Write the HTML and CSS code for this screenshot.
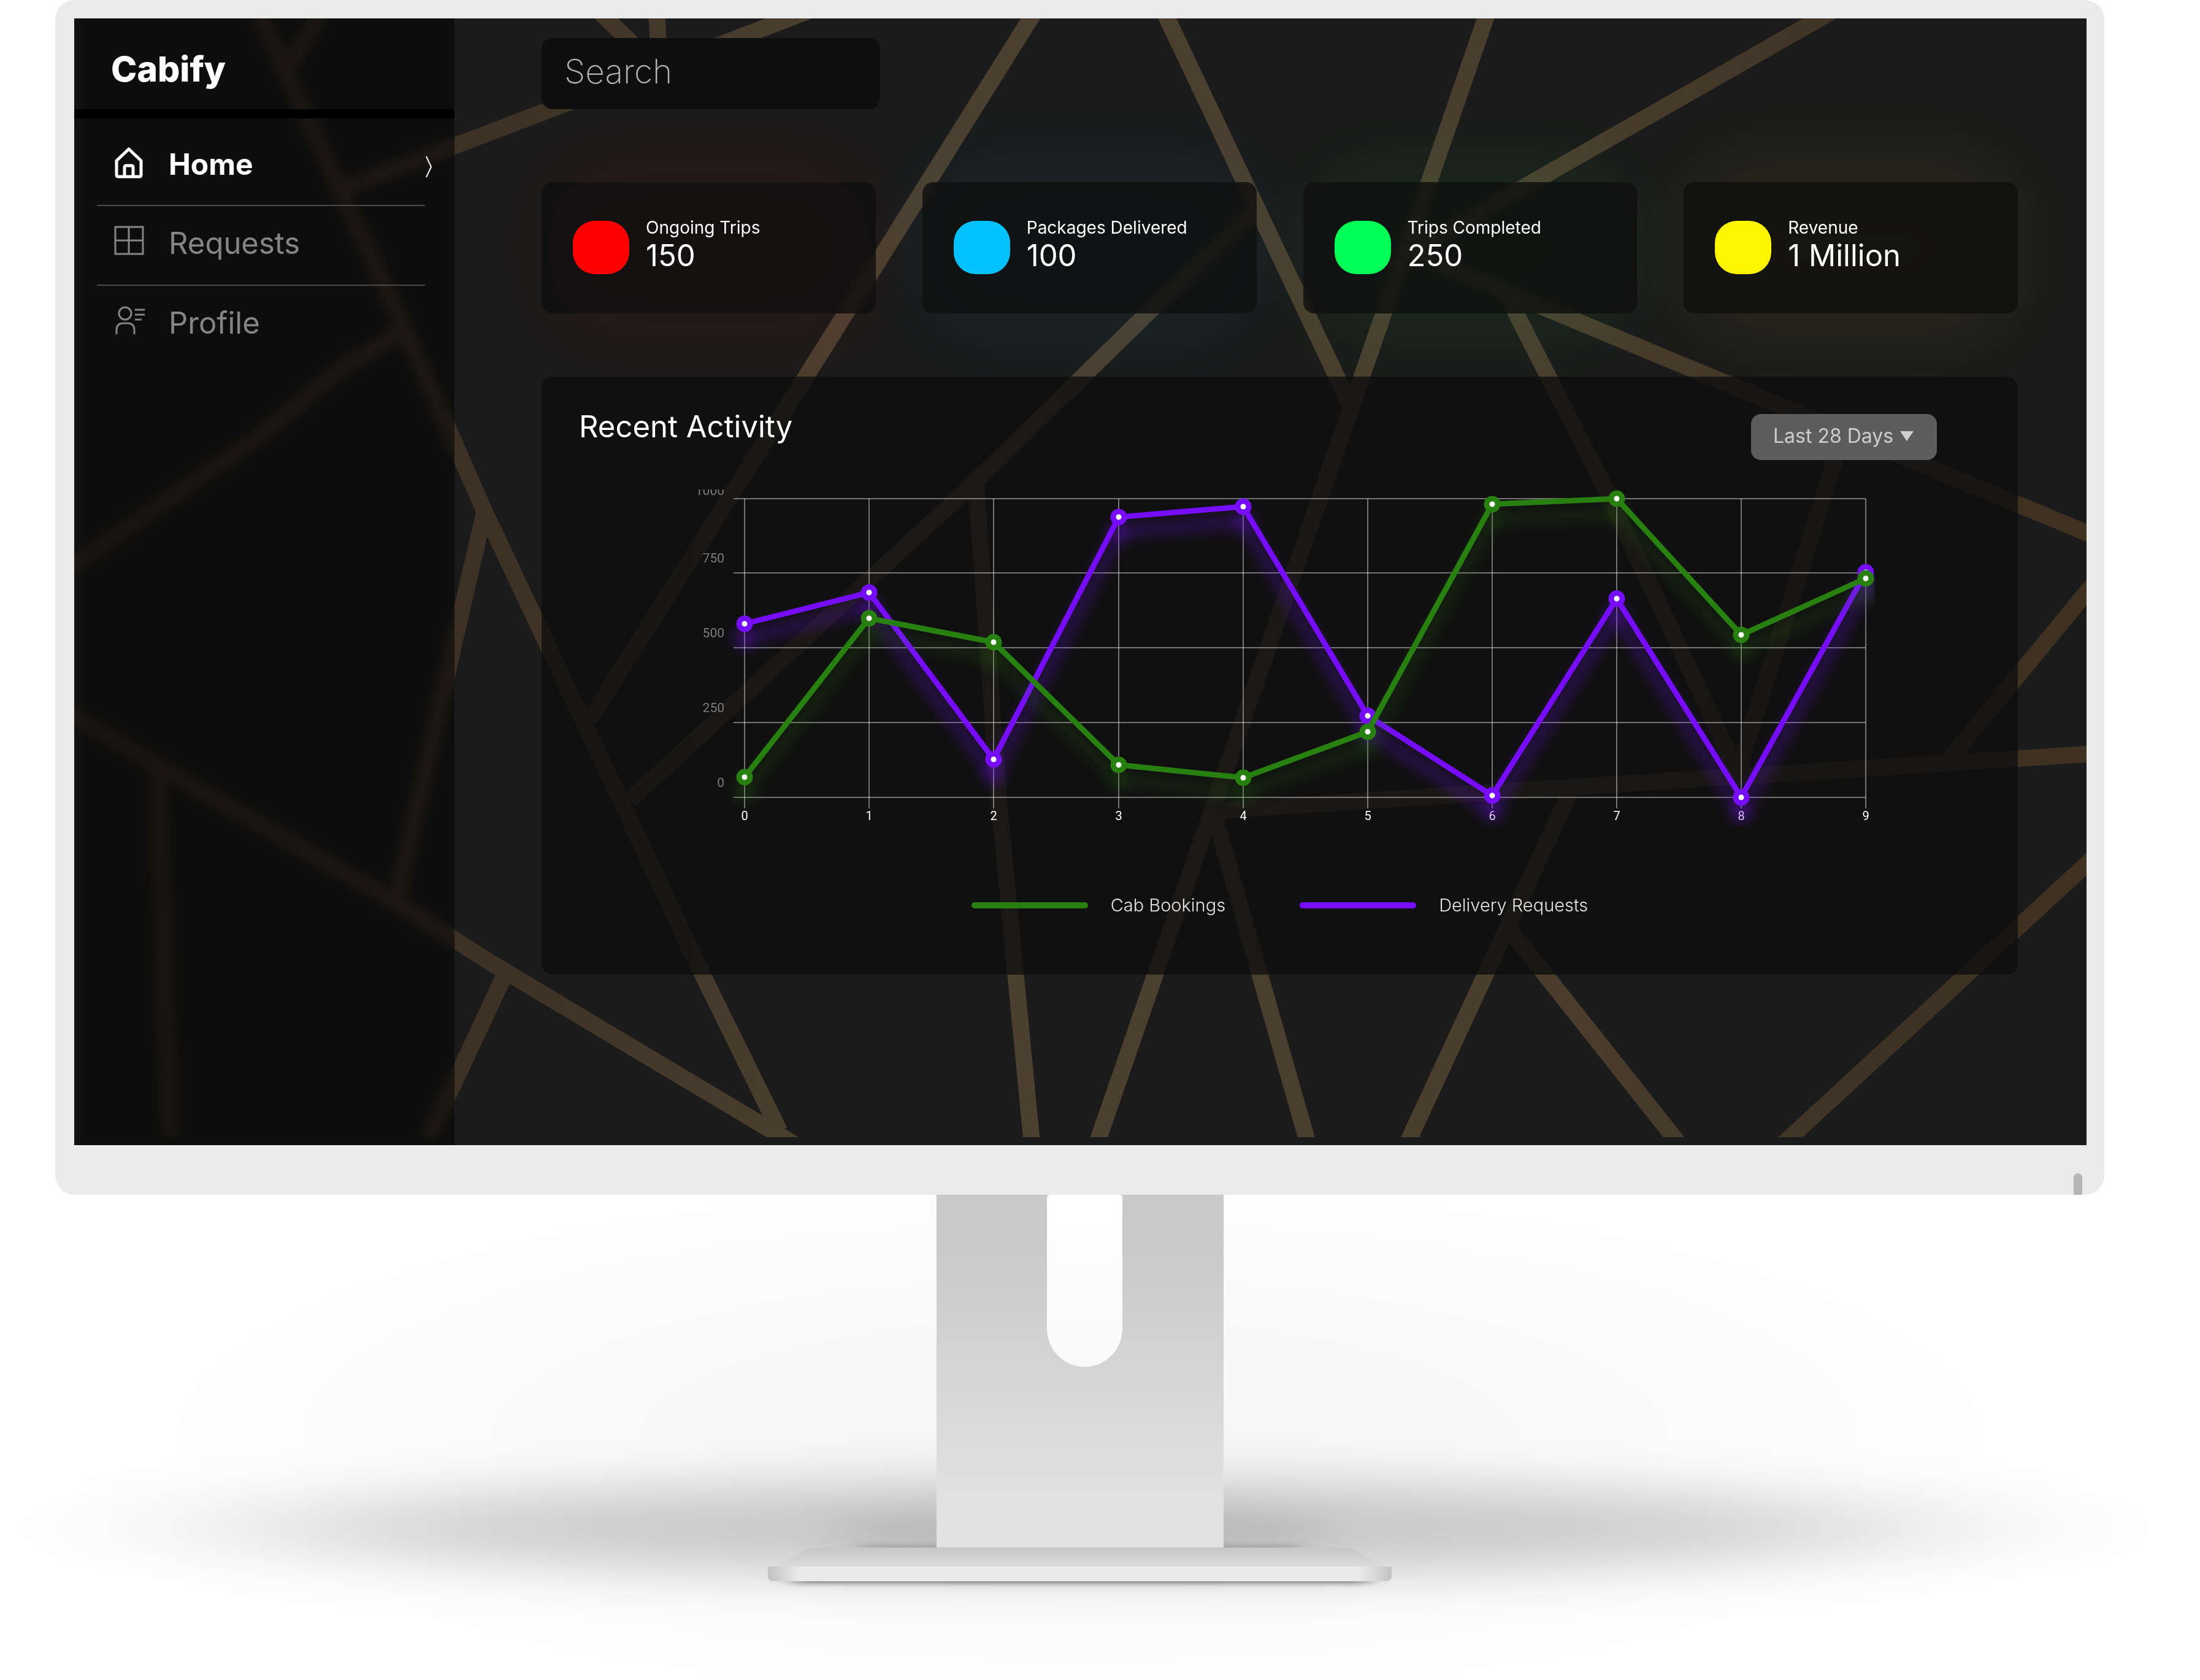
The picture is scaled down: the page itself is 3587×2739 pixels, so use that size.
FILE: index.html
```html
<!DOCTYPE html>
<html lang="en">
<head>
<meta charset="utf-8">
<meta name="viewport" content="width=device-width, initial-scale=1">
<title>Cabify</title>
<link rel="stylesheet" href="styles.css">
</head>
<body>
<div class="monitor">
  <div class="screen">
    <svg class="lattice" viewBox="120 30 3281 1838" preserveAspectRatio="none" aria-hidden="true">
      <defs>
        <linearGradient id="bronze" gradientUnits="userSpaceOnUse" x1="120" y1="0" x2="3401" y2="0">
          <stop offset="0" stop-color="#33291c"/>
          <stop offset=".22" stop-color="#3d3225"/>
          <stop offset=".38" stop-color="#4c4030"/>
          <stop offset=".75" stop-color="#4a3d2e"/>
          <stop offset=".9" stop-color="#3e3224"/>
          <stop offset="1" stop-color="#3f3121"/>
        </linearGradient>
        <clipPath id="lattice-area"><path d="M120 30H3401V1855H120Z"/></clipPath>
      </defs>
      <g fill="none" stroke="url(#bronze)" stroke-width="27" clip-path="url(#lattice-area)">
        <path d="M1690 13L1314 613L960 1174"/>
        <path d="M1894 13L2200 660"/>
        <path d="M2427 13L1785 1872"/>
        <path d="M2996 13L2300 410"/>
        <path d="M2303 413L3420 877"/>
        <path d="M2450 470L2617 798L2832 1260"/>
        <path d="M3003 710L2832 1260"/>
        <path d="M1990 1322L2530 1286L3420 1229"/>
        <path d="M3420 943L3180 1235"/>
        <path d="M3420 1392L2902 1870"/>
        <path d="M2560 1290L2291 1870"/>
        <path d="M2463 1520L2740 1870"/>
        <path d="M1979 1330L2133 1870"/>
        <path d="M2050 340L1870 511L1590 785L1026 1305"/>
        <path d="M1590 785L1627 1301L1682 1870"/>
        <path d="M417 13L658 536L789 834L1147 1595L1270 1845"/>
        <path d="M528 13L470 107"/>
        <path d="M562 306L1330 13"/>
        <path d="M970 13L1075 115L1069 13"/>
        <path d="M655 540L557 600L420 713L100 935"/>
        <path d="M789 834L741 1042L645 1470"/>
        <path d="M100 1157L257 1250L645 1472L800 1571L1300 1870"/>
        <path d="M257 1250L276 1870"/>
        <path d="M822 1590L690 1872"/>
      </g>
    </svg>

    <aside class="sidebar">
      <h1 class="brand">Cabify</h1>
      <nav aria-label="Main">
        <ul class="nav">
          <li class="nav-item">
            <a class="nav-link is-active" href="#home" aria-current="page">
              <svg class="nav-icon" viewBox="0 0 50 50" fill="none" stroke="currentColor" stroke-width="5" aria-hidden="true"><path d="M25 3L45 22V45Q45 48 42 48H8Q5 48 5 45V22Z" stroke-linejoin="round"/><path d="M18 48V33Q18 30 21 30H29Q32 30 32 33V48"/></svg>
              Home
              <svg class="nav-chevron" viewBox="0 0 12 36" fill="none" stroke="currentColor" stroke-width="2" aria-hidden="true"><path d="M2 1L10 18L2 35"/></svg>
            </a>
          </li>
          <li class="nav-item">
            <a class="nav-link" href="#requests">
              <svg class="nav-icon" viewBox="0 0 50 50" fill="none" stroke="currentColor" stroke-width="3" aria-hidden="true"><path d="M3 2H48V46H3ZM25 2V46M3 24H48"/></svg>
              Requests
            </a>
          </li>
          <li class="nav-item">
            <a class="nav-link" href="#profile">
              <svg class="nav-icon" viewBox="0 0 50 50" fill="none" stroke="currentColor" stroke-width="3" aria-hidden="true"><circle cx="19" cy="13" r="10"/><path d="M5 47V40Q5 29 16 29H23Q34 29 34 40V47M35 7H51M35 15H51M35 23H46"/></svg>
              Profile
            </a>
          </li>
        </ul>
      </nav>
    </aside>

    <main class="content">
      <form class="search" role="search">
        <input class="search-input" type="text" placeholder="Search" aria-label="Search">
      </form>

      <section class="stats" aria-label="Summary">
        <article class="stat stat-red">
          <span class="stat-swatch"></span>
          <div><h2 class="stat-label">Ongoing Trips</h2><p class="stat-value">150</p></div>
        </article>
        <article class="stat stat-blue">
          <span class="stat-swatch"></span>
          <div><h2 class="stat-label">Packages Delivered</h2><p class="stat-value">100</p></div>
        </article>
        <article class="stat stat-green">
          <span class="stat-swatch"></span>
          <div><h2 class="stat-label">Trips Completed</h2><p class="stat-value">250</p></div>
        </article>
        <article class="stat stat-yellow">
          <span class="stat-swatch"></span>
          <div><h2 class="stat-label">Revenue</h2><p class="stat-value">1 Million</p></div>
        </article>
      </section>

      <section class="activity" aria-labelledby="activity-title">
        <header class="activity-head">
          <h2 class="activity-title" id="activity-title">Recent Activity</h2>
          <div class="range">
            <select class="range-select" aria-label="Period"><option>Last 28 Days</option></select>
            <svg class="range-arrow" viewBox="0 0 22 16" aria-hidden="true"><path d="M0 0H22L11 16Z" fill="currentColor"/></svg>
          </div>
        </header>

        <svg class="chart" viewBox="1130 798 1927 550" role="img" aria-label="Cab bookings and delivery requests">
          <g class="grid-lines">
            <path d="M1196 813H3042M1196 934H3042M1196 1056H3042M1196 1178H3042M1196 1300H3042"/>
            <path d="M1214 813V1318M1417 813V1318M1620 813V1318M1824 813V1318M2027 813V1318M2230 813V1318M2433 813V1318M2636 813V1318M2839 813V1318M3042 813V1318"/>
          </g>
          <g class="axis-y">
            <text x="1181" y="807">1000</text><text x="1181" y="917">750</text><text x="1181" y="1039">500</text><text x="1181" y="1161">250</text><text x="1181" y="1283">0</text>
          </g>
          <g class="axis-x">
            <text x="1214" y="1337">0</text><text x="1417" y="1337">1</text><text x="1620" y="1337">2</text><text x="1824" y="1337">3</text><text x="2027" y="1337">4</text><text x="2230" y="1337">5</text><text x="2433" y="1337">6</text><text x="2636" y="1337">7</text><text x="2839" y="1337">8</text><text x="3042" y="1337">9</text>
          </g>
          <g class="series series-delivery">
            <polyline points="1214,1017 1417,966 1620,1238 1824,843 2027,826 2230,1167 2433,1297 2636,976 2839,1300 3042,933"/>
            <circle cx="1214" cy="1017" r="9"/><circle cx="1417" cy="966" r="9"/><circle cx="1620" cy="1238" r="9"/><circle cx="1824" cy="843" r="9"/><circle cx="2027" cy="826" r="9"/><circle cx="2230" cy="1167" r="9"/><circle cx="2433" cy="1297" r="9"/><circle cx="2636" cy="976" r="9"/><circle cx="2839" cy="1300" r="9"/><circle cx="3042" cy="933" r="9"/>
          </g>
          <g class="series series-cab">
            <polyline points="1214,1267 1417,1008 1620,1047 1824,1247 2027,1268 2230,1193 2433,822 2636,813 2839,1035 3042,943"/>
            <circle cx="1214" cy="1267" r="9"/><circle cx="1417" cy="1008" r="9"/><circle cx="1620" cy="1047" r="9"/><circle cx="1824" cy="1247" r="9"/><circle cx="2027" cy="1268" r="9"/><circle cx="2230" cy="1193" r="9"/><circle cx="2433" cy="822" r="9"/><circle cx="2636" cy="813" r="9"/><circle cx="2839" cy="1035" r="9"/><circle cx="3042" cy="943" r="9"/>
          </g>
        </svg>

        <ul class="legend">
          <li class="legend-item"><span class="legend-line legend-cab"></span>Cab Bookings</li>
          <li class="legend-item"><span class="legend-line legend-delivery"></span>Delivery Requests</li>
        </ul>
      </section>
    </main>
  </div>
  <span class="power"></span>
</div>

<svg class="stand" viewBox="0 1949 3587 789" aria-hidden="true">
  <defs>
    <radialGradient id="haze"><stop offset="0" stop-color="#000" stop-opacity=".04"/><stop offset=".5" stop-color="#000" stop-opacity=".02"/><stop offset="1" stop-color="#000" stop-opacity="0"/></radialGradient>
    <linearGradient id="neck" x1="0" y1="0" x2="0" y2="1"><stop offset=".15" stop-color="#c9c9c9"/><stop offset=".85" stop-color="#e1e1e1"/></linearGradient>
    <linearGradient id="slot" x1="0" y1="0" x2="0" y2="1"><stop offset="0" stop-color="#fff"/><stop offset="1" stop-color="#f9f9f9"/></linearGradient>
    <linearGradient id="foot-top" x1="0" y1="0" x2="0" y2="1"><stop offset=".1" stop-color="#c8c8c8"/><stop offset="1" stop-color="#dcdcdc"/></linearGradient>
    <linearGradient id="foot-front"><stop offset="0" stop-color="#c2c2c2"/><stop offset=".05" stop-color="#eaeaea"/><stop offset=".95" stop-color="#eaeaea"/><stop offset="1" stop-color="#c2c2c2"/></linearGradient>
    <filter id="soft-wide" x="-40%" y="-200%" width="180%" height="500%"><feGaussianBlur stdDeviation="260 38"/></filter>
    <filter id="soft" x="-20%" y="-150%" width="140%" height="400%"><feGaussianBlur stdDeviation="40 24"/></filter>
    <filter id="soft-thin" x="-20%" y="-300%" width="140%" height="700%"><feGaussianBlur stdDeviation="16 5"/></filter>
  </defs>
  <ellipse cx="1760" cy="2350" rx="1720" ry="480" fill="url(#haze)"/>
  <ellipse cx="1770" cy="2493" rx="1350" ry="80" fill="#000" fill-opacity=".19" filter="url(#soft-wide)"/>
  <ellipse cx="1761" cy="2500" rx="420" ry="44" fill="#000" fill-opacity=".08" filter="url(#soft)"/>
  <path d="M1400 2520H2120V2530H1400Z" fill="#000" fill-opacity=".2" filter="url(#soft-thin)"/>
  <path d="M1290 2570H2232V2582H1290Z" fill="#000" fill-opacity=".5" filter="url(#soft-thin)"/>
  <path d="M1527 1949H1995V2524H1527Z" fill="url(#neck)"/>
  <path d="M1707 1954Q1707 1949 1712 1949H1825Q1830 1949 1830 1954V2167A61 62 0 0 1 1707 2167Z" fill="url(#slot)"/>
  <path d="M1321 2524H2200L2262 2556H1262Z" fill="url(#foot-top)"/>
  <path d="M1252 2557Q1252 2555 1254 2555H2267Q2269 2555 2269 2557V2570Q2269 2579 2260 2579H1261Q1252 2579 1252 2570Z" fill="url(#foot-front)"/>
</svg>
</body>
</html>
```
FILE: styles.css
```css
*,
*::before,
*::after {
  box-sizing: border-box;
}

body {
  margin: 0;
  background: #fff;
  font-family: Inter, "Liberation Sans", sans-serif;
  color: #fff;
}

h1,
h2,
p,
ul {
  margin: 0;
  padding: 0;
  font-weight: 400;
}

ul {
  list-style: none;
}

/* Monitor */

.monitor {
  position: relative;
  margin: 0 156px 0 90px;
  padding: 30px 29px 81px 31px;
  border-radius: 32px;
  background: #ebebeb;
}

.screen {
  position: relative;
  display: grid;
  grid-template-columns: 620px 1fr;
  overflow: hidden;
  background: #1b1b1b;
}

.lattice {
  position: absolute;
  inset: 0;
  width: 100%;
  height: 100%;
}

.power {
  position: absolute;
  right: 36px;
  bottom: 0;
  width: 14px;
  height: 35px;
  border-radius: 7px 7px 0 0;
  background: #b5b5b5;
}

.stand {
  display: block;
  width: 100%;
}

/* Sidebar */

.sidebar {
  position: relative;
  background: rgba(0, 0, 0, 0.5);
  backdrop-filter: blur(8px);
}

.brand {
  padding: 46px 0 29px 60px;
  border-bottom: 15px solid #000;
  font-size: 57px;
  line-height: 73px;
  font-weight: 800;
}

.nav {
  margin: 0 48px 0 37px;
}

.nav-item + .nav-item {
  border-top: 2px solid #4a4a4a;
}

.nav-link {
  position: relative;
  display: flex;
  align-items: center;
  gap: 40px;
  height: 128px;
  padding: 0 0 8px 27px;
  color: #858585;
  font-size: 49px;
  text-decoration: none;
}

.nav-link.is-active {
  height: 141px;
  padding: 8px 0 0 27px;
  color: #fff;
  font-size: 48px;
  font-weight: 700;
}

.nav-icon {
  width: 50px;
  height: 50px;
  margin-bottom: 6px;
  overflow: visible;
}

.nav-chevron {
  position: absolute;
  right: -12px;
  bottom: 44px;
  width: 12px;
  height: 36px;
}

/* Content */

.content {
  position: relative;
  z-index: 0;
  padding: 32px 112px 278px 142px;
}

.search-input {
  display: block;
  width: 552px;
  height: 116px;
  padding: 0 37px 8px;
  border: 0;
  border-radius: 18px;
  background: #0f0f0f;
  color: #fff;
  font: 200 55px Inter, "Liberation Sans", sans-serif;
}

.search-input::placeholder {
  color: #b4b4b4;
  opacity: 1;
}

.stats {
  display: grid;
  grid-template-columns: repeat(4, 1fr);
  gap: 76px;
  margin-top: 119px;
}

.stat {
  position: relative;
  display: flex;
  align-items: center;
  gap: 27px;
  height: 214px;
  padding: 0 51px 2px;
}

.stat::before {
  content: "";
  position: absolute;
  z-index: -2;
  inset: -24px 20px;
  border-radius: 80px;
  background: var(--tone);
  opacity: 0.07;
  filter: blur(70px);
}

.stat::after {
  content: "";
  position: absolute;
  z-index: -1;
  inset: 0;
  border-radius: 18px;
  background: rgba(14, 14, 14, 0.79);
  backdrop-filter: blur(8px);
}

.stat-red {
  --tone: #f00;
}

.stat-blue {
  --tone: #00c2ff;
}

.stat-green {
  --tone: #00ff57;
}

.stat-yellow {
  --tone: #fff500;
}

.stat-swatch {
  width: 92px;
  height: 87px;
  border-radius: 36px;
  background: var(--tone);
}

.stat-label {
  font-size: 28px;
  line-height: 34px;
}

.stat-value {
  padding-bottom: 6px;
  font-size: 49px;
  line-height: 58px;
}

/* Activity */

.activity {
  margin-top: 103px;
  padding: 61px 0 94px;
  border-radius: 18px;
  background: rgba(14, 14, 14, 0.79);
}

.activity-head {
  display: flex;
  justify-content: space-between;
  padding: 0 132px 0 61px;
}

.activity-title {
  font-size: 49px;
  line-height: 42px;
}

.range {
  position: relative;
}

.range-select {
  display: block;
  width: 303px;
  height: 75px;
  padding: 0 36px 5px;
  border: 0;
  border-radius: 16px;
  appearance: none;
  background: #5d5d5d;
  color: #cdcdcd;
  font: 400 32px Inter, "Liberation Sans", sans-serif;
}

.range-arrow {
  position: absolute;
  right: 38px;
  top: 28px;
  width: 22px;
  height: 16px;
  color: #d0d0d0;
}

.chart {
  display: block;
  width: calc(100% - 480px);
  margin: 48px 233px 0 247px;
  font-family: Roboto, "Liberation Sans", sans-serif;
}

.grid-lines {
  fill: none;
  stroke: #fff;
  stroke-opacity: 0.42;
  stroke-width: 2px;
}

.axis-y {
  fill: #7c7c7c;
  font-size: 21px;
  text-anchor: end;
}

.axis-x {
  fill: #fff;
  font-size: 20px;
  text-anchor: middle;
}

.series {
  stroke-width: 9px;
}

.series polyline {
  fill: none;
}

.series circle {
  fill: #fff;
}

.series-delivery {
  stroke: #770dff;
  filter: drop-shadow(0 24px 12px rgba(119, 13, 255, 0.6));
}

.series-cab {
  stroke: #278010;
  filter: drop-shadow(0 24px 12px rgba(39, 128, 16, 0.4));
}

.legend {
  display: flex;
  justify-content: center;
  gap: 121px;
  margin-top: 109px;
}

.legend-item {
  display: flex;
  align-items: center;
  gap: 37px;
  color: #e4e4e4;
  font-size: 29px;
  line-height: 38px;
  font-weight: 300;
}

.legend-line {
  width: 190px;
  height: 10px;
  border-radius: 5px;
}

.legend-cab {
  background: #278010;
}

.legend-delivery {
  background: #770dff;
}
```
